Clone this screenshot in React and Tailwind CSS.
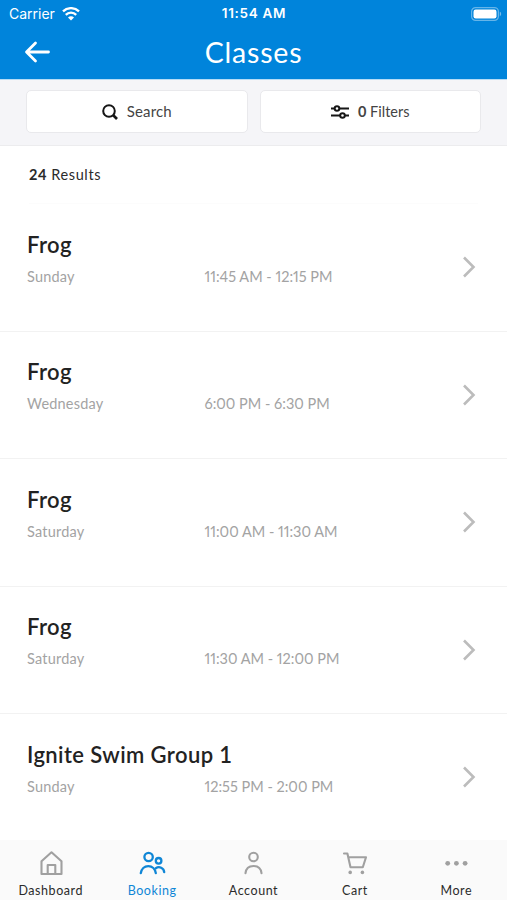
const classes = [
  { name: 'Frog', day: 'Sunday', time: '11:45 AM - 12:15 PM' },
  { name: 'Frog', day: 'Wednesday', time: '6:00 PM - 6:30 PM' },
  { name: 'Frog', day: 'Saturday', time: '11:00 AM - 11:30 AM' },
  { name: 'Frog', day: 'Saturday', time: '11:30 AM - 12:00 PM' },
  { name: 'Ignite Swim Group 1', day: 'Sunday', time: '12:55 PM - 2:00 PM' },
]

function WifiIcon() {
  return (
    <svg className="w-[18px] h-[14px]" viewBox="0 0 18 14" fill="none" stroke="white" strokeWidth="2.3">
      <path d="M1 4.4a11.4 11.4 0 0 1 16 0" />
      <path d="M3.8 7.9a7.3 7.3 0 0 1 10.4 0" />
      <path d="M6 10.5a4.2 4.2 0 0 1 6 0L9 13.6Z" fill="white" stroke="none" />
    </svg>
  )
}

function BatteryIcon() {
  return (
    <svg className="w-[31px] h-[14px]" viewBox="0 0 31 14">
      <rect x="0.6" y="0.6" width="26.8" height="12.8" rx="4" fill="none" stroke="white" strokeOpacity="0.4" strokeWidth="1.2" />
      <rect x="2.5" y="2.5" width="23" height="9" rx="2.2" fill="white" />
      <path d="M28.8 4.8c1.8.6 1.8 3.8 0 4.4Z" fill="white" fillOpacity="0.45" />
    </svg>
  )
}

function HomeIcon() {
  return (
    <svg className="w-7 h-7" viewBox="0 0 28 28" fill="none" stroke="currentColor" strokeWidth="2.1" strokeLinejoin="round">
      <path d="M4.5 12.3 14.5 3.3l10 9V25h-20Z" />
      <path d="M10.7 25v-9h7.6v9" />
    </svg>
  )
}

function GroupIcon() {
  return (
    <svg className="w-7 h-7" viewBox="0 0 28 28" fill="none" stroke="currentColor" strokeWidth="2.3" strokeLinecap="round">
      <circle cx="10.6" cy="8" r="4.2" />
      <circle cx="20.6" cy="11.8" r="2.8" />
      <path d="M2.8 24.2c.6-4.2 3.6-7 7.5-7s6.9 2.8 7.5 7" />
      <path d="M17.8 19.2c3.5-2.4 8-.2 8.4 3.9" />
    </svg>
  )
}

function PersonIcon() {
  return (
    <svg className="w-7 h-7" viewBox="0 0 28 28" fill="none" stroke="currentColor" strokeWidth="2.1" strokeLinecap="round">
      <circle cx="14.5" cy="8" r="4.3" />
      <path d="M6.5 24.2c.5-4.6 3.7-7.2 8-7.2s7.5 2.6 8 7.2" />
    </svg>
  )
}

function CartIcon() {
  return (
    <svg className="w-7 h-7" viewBox="0 0 28 28" fill="none" stroke="currentColor" strokeWidth="2.1" strokeLinecap="round" strokeLinejoin="round">
      <path d="M3 4.5h3.4L9.5 18.2h12.3L25 8.2H7.3" />
      <circle cx="9.2" cy="23.4" r="1.8" fill="currentColor" stroke="none" />
      <circle cx="21.4" cy="23.4" r="1.8" fill="currentColor" stroke="none" />
    </svg>
  )
}

function MoreIcon() {
  return (
    <svg className="w-7 h-7" viewBox="0 0 28 28" fill="currentColor">
      <circle cx="5.7" cy="14.3" r="2.4" />
      <circle cx="14.4" cy="14.3" r="2.4" />
      <circle cx="23.1" cy="14.3" r="2.4" />
    </svg>
  )
}

const tabs = [
  { label: 'Dashboard', Icon: HomeIcon },
  { label: 'Booking', Icon: GroupIcon, active: true },
  { label: 'Account', Icon: PersonIcon },
  { label: 'Cart', Icon: CartIcon },
  { label: 'More', Icon: MoreIcon },
]

function ClassRow({ item }) {
  return (
    <button className="w-full h-[127.5px] shrink-0 border-b border-[#f2f2f2] pl-[27px] pr-[31px] flex items-center text-left">
      <div className="flex-1 h-full pt-[25.5px]">
        <h2 className="text-[22px] leading-[30px] font-semibold tracking-[0.4px] text-[#222]">{item.name}</h2>
        <div className="flex mt-[7px] text-[14.5px] leading-5 proportional-nums text-[#a3a3a3]">
          <span className="w-[177.5px] tracking-[0.2px]">{item.day}</span>
          <span>{item.time}</span>
        </div>
      </div>
      <svg className="w-[14px] h-[22px]" viewBox="0 0 14 22" fill="none" stroke="#bcbcbc" strokeWidth="2.6">
        <path d="m2 1.5 9.5 9.5L2 20.5" />
      </svg>
    </button>
  )
}

export default function App() {
  return (
    <div className="h-[900px] w-full flex flex-col overflow-hidden bg-white font-['Lato',sans-serif]">
      <header className="h-[79px] shrink-0 bg-[#0084db] text-white">
        <div className="h-[27px] px-[9px] grid grid-cols-3 items-center font-['Inter',sans-serif] text-sm">
          <div className="flex items-center gap-[7px]">
            <span>Carrier</span>
            <WifiIcon />
          </div>
          <span className="text-center text-[13.5px] font-semibold tracking-[0.7px] whitespace-nowrap pl-px pt-px">11:54 AM</span>
          <div className="flex justify-end -mr-[4px]">
            <BatteryIcon />
          </div>
        </div>
        <div className="h-[50px] px-6 grid grid-cols-[40px_1fr_40px] items-center">
          <svg className="w-[27px] h-6" viewBox="0 0 27 24" fill="none" stroke="white" strokeWidth="2.8" strokeLinecap="round" strokeLinejoin="round">
            <path d="M24.5 12H3M11.5 3 2.5 12l9 9" />
          </svg>
          <h1 className="text-center text-[28.5px] leading-[50px] tracking-[0.8px]">Classes</h1>
        </div>
      </header>

      <div className="h-[67px] shrink-0 border-t border-t-[#b5dcf6] border-b border-b-[#ececee] bg-[#f5f5f8] px-[26px] pt-[10px] grid grid-cols-2 gap-3 items-start text-[15px] text-[#444]">
        <button className="h-[43px] border border-[#e9e9ec] rounded-[5px] bg-white flex items-center justify-center gap-[9px]">
          <svg className="w-4 h-4" viewBox="0 0 16 16" fill="none" stroke="#161616" strokeWidth="2">
            <circle cx="7" cy="7" r="5.8" />
            <path d="m11 11 4 4" strokeWidth="2.6" />
          </svg>
          <span className="tracking-[0.15px]">Search</span>
        </button>
        <button className="h-[43px] border border-[#e9e9ec] rounded-[5px] bg-white flex items-center justify-center gap-[9px]">
          <svg className="w-[18px] h-[14px]" viewBox="0 0 18 14" fill="none" stroke="#161616" strokeWidth="2">
            <path d="M0 3.5h3.7M8.3 3.5H18M0 10.5h9.2M13.8 10.5H18" />
            <circle cx="6" cy="3.5" r="2.3" />
            <circle cx="11.5" cy="10.5" r="2.3" />
          </svg>
          <span className="text-[14.5px]"><b>0</b> Filters</span>
        </button>
      </div>

      <main className="flex-1 min-h-0 overflow-hidden flex flex-col">
        <p className="h-[58px] shrink-0 mx-[29px] border-b border-[#fcfcfc] text-[14.5px] leading-[57px] tracking-[0.6px] text-[#2b2b2b]">
          <b>24</b> Results
        </p>
        {classes.map((item, i) => <ClassRow key={i} item={item} />)}
      </main>

      <nav className="h-[60px] shrink-0 bg-[#fafafa] grid grid-cols-5">
        {tabs.map(({ label, Icon, active }) => (
          <button key={label} className={`flex flex-col items-center pt-[9px] ${active ? 'text-[#0f86d6]' : 'text-[#a0a0a0]'}`}>
            <Icon />
            <span className={`mt-[6px] text-[12.5px] leading-4 tracking-[0.55px] ${active ? '' : 'text-[#2b2b2b]'}`}>{label}</span>
          </button>
        ))}
      </nav>
    </div>
  )
}
